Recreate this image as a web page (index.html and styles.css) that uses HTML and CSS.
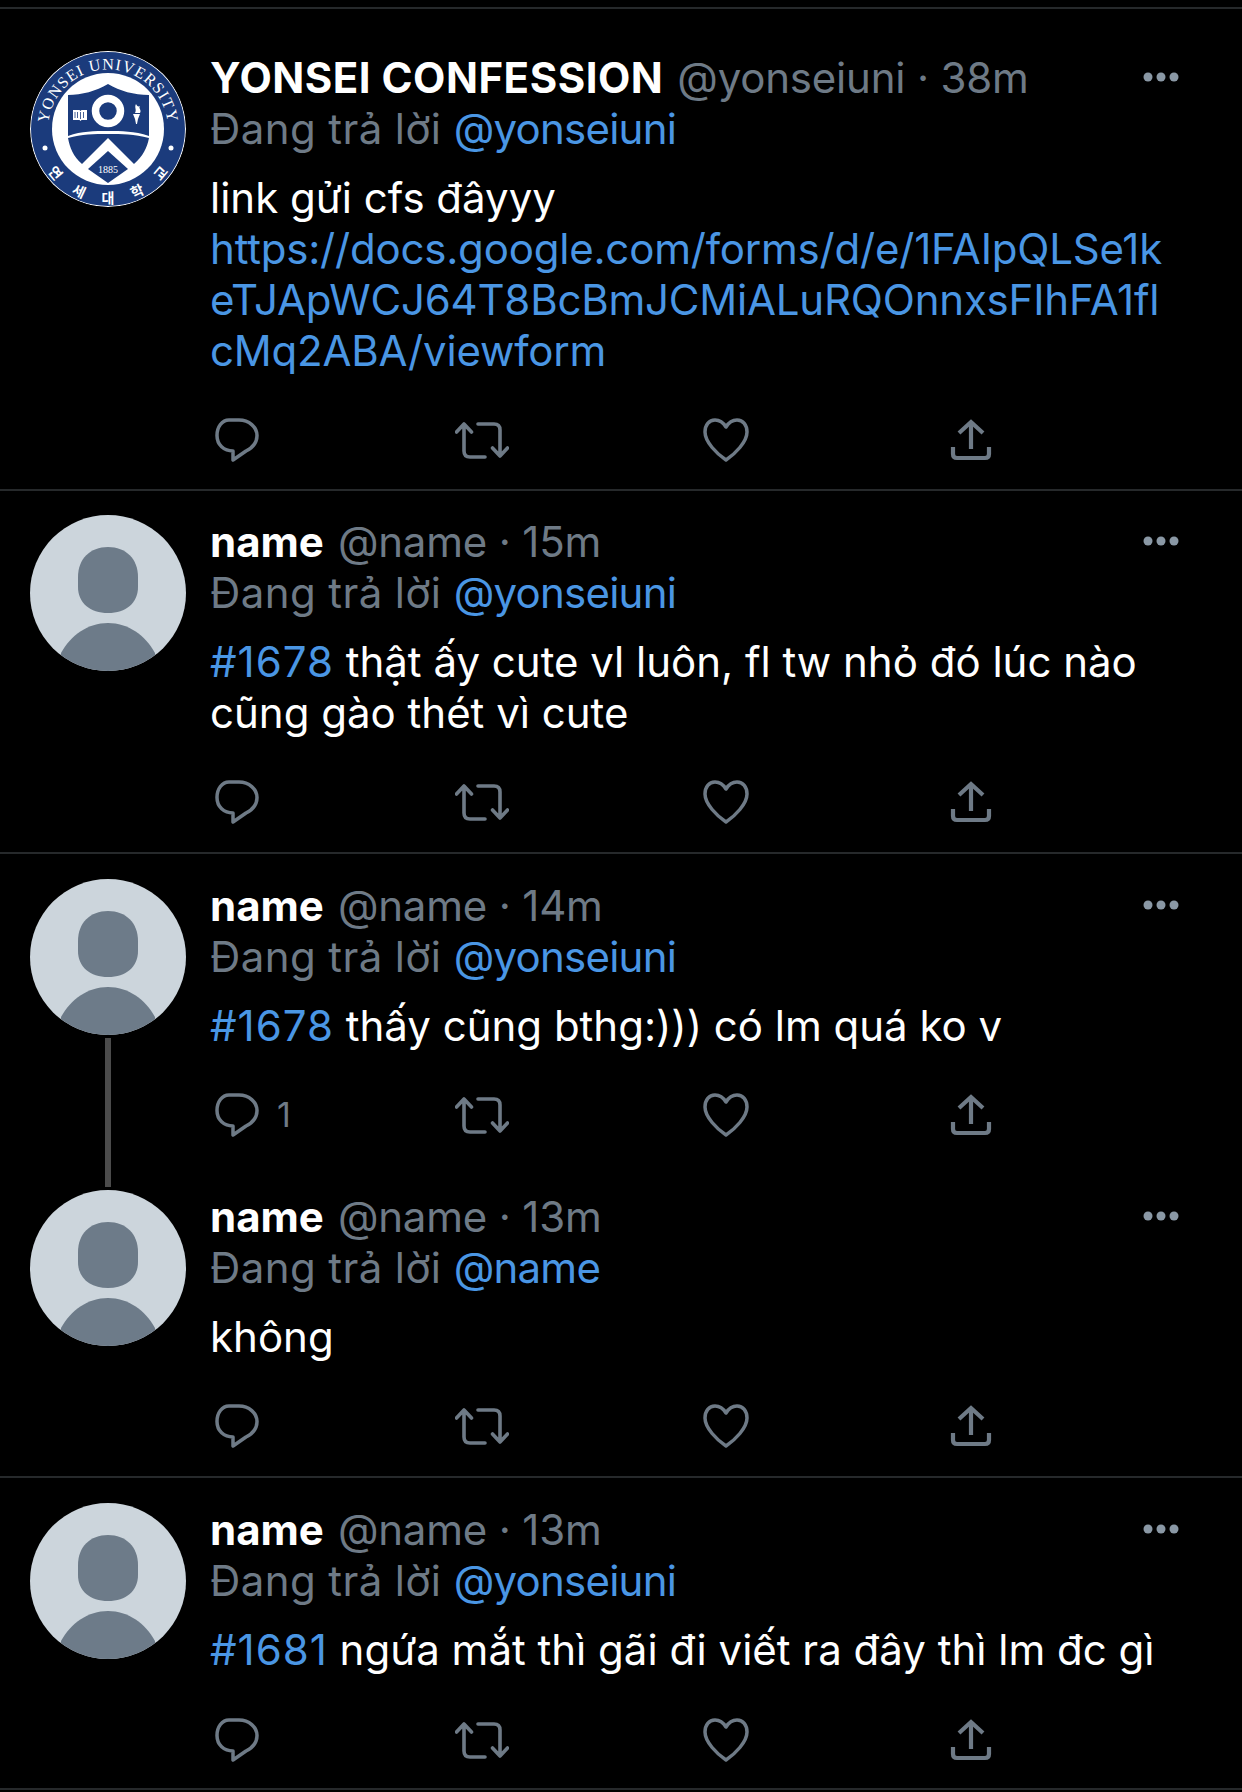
FILE: index.html
```html
<!DOCTYPE html>
<html lang="vi">
<head>
<meta charset="utf-8">
<title>Tweets</title>
<link rel="stylesheet" href="styles.css">
</head>
<body>
<svg class="defs" width="0" height="0" aria-hidden="true">
  <symbol id="i-avatar" viewBox="0 0 156 156">
    <rect width="156" height="156" fill="#ccd5dc"/>
    <path d="M78 32C96 32 108 44 108 62V72C108 88 96 98 78 98C60 98 48 88 48 72V62C48 44 60 32 78 32Z" fill="#6d7b89"/>
    <path d="M78 108C98 108 115 120 125 138V160H31V138C41 120 58 108 78 108Z" fill="#6d7b89"/>
  </symbol>
  <symbol id="i-reply" viewBox="0 0 44 44">
    <path d="M14 2H24C34 2 42 9 42 17.5C42 25 37 30 31 33L18 42V33C9 33 2 27 2 17.5C2 9 7 2 14 2Z" fill="none" stroke="currentColor" stroke-width="3.5" stroke-linejoin="round"/>
  </symbol>
  <symbol id="i-retweet" viewBox="0 0 54 38">
    <path d="M9 3V30Q9 36 15 36H30M1.500 11L9 3L16.500 11M23 3H39Q45 3 45 9V35M37.500 27L45 35L52.500 27" fill="none" stroke="currentColor" stroke-width="3.6" stroke-linecap="round" stroke-linejoin="round"/>
  </symbol>
  <symbol id="i-heart" viewBox="0 0 46 44">
    <path d="M23 9C20 4 16 2 12 2C6 2 2 7 2 14C2 24 14 36 23 42C32 36 44 24 44 14C44 7 40 2 34 2C30 2 26 4 23 9Z" fill="none" stroke="currentColor" stroke-width="3.5" stroke-linejoin="round"/>
  </symbol>
  <symbol id="i-share" viewBox="0 0 42 42">
    <path d="M21 3V30M9 14L21 3L33 14M3 28V35Q3 39 7 39H35Q39 39 39 35V28" fill="none" stroke="currentColor" stroke-width="4.2" stroke-linejoin="miter"/>
  </symbol>
  <symbol id="i-more" viewBox="0 0 36 10">
    <circle cx="5" cy="5" r="4.500" fill="currentColor"/>
    <circle cx="18" cy="5" r="4.500" fill="currentColor"/>
    <circle cx="31" cy="5" r="4.500" fill="currentColor"/>
  </symbol>
</svg>

<main class="timeline">

  <article class="tweet tweet-first">
    <div class="side">
      <svg class="avatar" viewBox="0 0 156 156" role="img" aria-label="Yonsei University">
        <defs>
          <path id="arc-top" d="M22 100A60 60 0 1 1 134 100"/>
        </defs>
        <circle cx="78" cy="78" r="78" fill="#fff"/>
        <circle cx="78" cy="78" r="77" fill="#1b3b7c"/>
        <circle cx="78" cy="78" r="56" fill="#fff"/>
        <path d="M78 33C90 40 104 44 119 44V70L119 85C104 80 92 80 78 80C64 80 52 80 38 85V44C52 44 66 40 78 33Z" fill="#1b3b7c"/>
        <path d="M38 87C52 83 64 83 78 83C92 83 104 83 119 87C117 97 113 105 104 113L78 87L52 113C43 105 40 97 38 87Z" fill="#1b3b7c"/>
        <path d="M78 100L98 118L78 132L58 118Z" fill="#1b3b7c"/>
        <circle cx="78" cy="60" r="12.500" fill="#1b3b7c" stroke="#fff" stroke-width="7.500"/>
        <path d="M43 59H49.500L50.500 60L51.500 59H57V69H51.500L50.500 70L49.500 69H43Z" fill="#fff"/>
        <path d="M50.500 61V68M45 61V67M47.500 61V67M53.500 61V67" stroke="#1b3b7c" stroke-width="0.800"/>
        <path d="M106 53C104 57 107 58 105 62H110C112 59 108 57 110 55C108 56 107 55 106 53ZM103 63H110L108 68L107 73H106L105 68Z" fill="#fff"/>
        <text class="seal-en"><textPath href="#arc-top" startOffset="50%" text-anchor="middle">YONSEI UNIVERSITY</textPath></text>
        <text class="seal-ko" x="78" y="152" text-anchor="middle" transform="rotate(50 78 78)">연</text>
        <text class="seal-ko" x="78" y="152" text-anchor="middle" transform="rotate(25 78 78)">세</text>
        <text class="seal-ko" x="78" y="152" text-anchor="middle">대</text>
        <text class="seal-ko" x="78" y="152" text-anchor="middle" transform="rotate(-25 78 78)">학</text>
        <text class="seal-ko" x="78" y="152" text-anchor="middle" transform="rotate(-50 78 78)">교</text>
        <text class="seal-year" x="78" y="122" text-anchor="middle">1885</text>
        <circle cx="15" cy="97" r="2.500" fill="#fff"/>
        <circle cx="141" cy="97" r="2.500" fill="#fff"/>
      </svg>
    </div>
    <div class="body">
      <header class="head">
        <span class="name name-caps">YONSEI CONFESSION</span>
        <span class="meta">@yonseiuni · 38m</span>
        <svg class="more"><use href="#i-more"/></svg>
      </header>
      <p class="replying">Đang trả lời <a class="link">@yonseiuni</a></p>
      <p class="text">link gửi cfs đâyyy<br><a class="link url">https://docs.google.com/forms/d/e/1FAIpQLSe1k<br>eTJApWCJ64T8BcBmJCMiALuRQOnnxsFIhFA1fl<br>cMq2ABA/viewform</a></p>
      <div class="actions">
        <span class="action"><svg class="ic-reply"><use href="#i-reply"/></svg></span>
        <span class="action"><svg class="ic-retweet"><use href="#i-retweet"/></svg></span>
        <span class="action"><svg class="ic-heart"><use href="#i-heart"/></svg></span>
        <span class="action"><svg class="ic-share"><use href="#i-share"/></svg></span>
      </div>
    </div>
  </article>

  <article class="tweet">
    <div class="side"><svg class="avatar"><use href="#i-avatar"/></svg></div>
    <div class="body">
      <header class="head">
        <span class="name">name</span>
        <span class="meta">@name · 15m</span>
        <svg class="more"><use href="#i-more"/></svg>
      </header>
      <p class="replying">Đang trả lời <a class="link">@yonseiuni</a></p>
      <p class="text"><a class="link tag">#1678</a> thật ấy cute vl luôn, fl tw nhỏ đó lúc nào<br>cũng gào thét vì cute</p>
      <div class="actions">
        <span class="action"><svg class="ic-reply"><use href="#i-reply"/></svg></span>
        <span class="action"><svg class="ic-retweet"><use href="#i-retweet"/></svg></span>
        <span class="action"><svg class="ic-heart"><use href="#i-heart"/></svg></span>
        <span class="action"><svg class="ic-share"><use href="#i-share"/></svg></span>
      </div>
    </div>
  </article>

  <article class="tweet tweet-thread-start">
    <div class="side">
      <svg class="avatar"><use href="#i-avatar"/></svg>
      <span class="thread-line"></span>
    </div>
    <div class="body">
      <header class="head">
        <span class="name">name</span>
        <span class="meta">@name · 14m</span>
        <svg class="more"><use href="#i-more"/></svg>
      </header>
      <p class="replying">Đang trả lời <a class="link">@yonseiuni</a></p>
      <p class="text"><a class="link tag">#1678</a> thấy cũng bthg:))) có lm quá ko v</p>
      <div class="actions">
        <span class="action"><svg class="ic-reply"><use href="#i-reply"/></svg><span class="count">1</span></span>
        <span class="action"><svg class="ic-retweet"><use href="#i-retweet"/></svg></span>
        <span class="action"><svg class="ic-heart"><use href="#i-heart"/></svg></span>
        <span class="action"><svg class="ic-share"><use href="#i-share"/></svg></span>
      </div>
    </div>
  </article>

  <article class="tweet tweet-thread-end">
    <div class="side"><svg class="avatar"><use href="#i-avatar"/></svg></div>
    <div class="body">
      <header class="head">
        <span class="name">name</span>
        <span class="meta">@name · 13m</span>
        <svg class="more"><use href="#i-more"/></svg>
      </header>
      <p class="replying">Đang trả lời <a class="link">@name</a></p>
      <p class="text">không</p>
      <div class="actions">
        <span class="action"><svg class="ic-reply"><use href="#i-reply"/></svg></span>
        <span class="action"><svg class="ic-retweet"><use href="#i-retweet"/></svg></span>
        <span class="action"><svg class="ic-heart"><use href="#i-heart"/></svg></span>
        <span class="action"><svg class="ic-share"><use href="#i-share"/></svg></span>
      </div>
    </div>
  </article>

  <article class="tweet tweet-last">
    <div class="side"><svg class="avatar"><use href="#i-avatar"/></svg></div>
    <div class="body">
      <header class="head">
        <span class="name">name</span>
        <span class="meta">@name · 13m</span>
        <svg class="more"><use href="#i-more"/></svg>
      </header>
      <p class="replying">Đang trả lời <a class="link">@yonseiuni</a></p>
      <p class="text"><a class="link tag">#1681</a> ngứa mắt thì gãi đi viết ra đây thì lm đc gì</p>
      <div class="actions">
        <span class="action"><svg class="ic-reply"><use href="#i-reply"/></svg></span>
        <span class="action"><svg class="ic-retweet"><use href="#i-retweet"/></svg></span>
        <span class="action"><svg class="ic-heart"><use href="#i-heart"/></svg></span>
        <span class="action"><svg class="ic-share"><use href="#i-share"/></svg></span>
      </div>
    </div>
  </article>

</main>
</body>
</html>
```
FILE: styles.css
```css
* { box-sizing: border-box; }

html, body {
  margin: 0;
  padding: 0;
  background: #000;
  height: 100%;
  overflow: hidden;
}

body {
  font-family: Inter, "Noto Sans", "Liberation Sans", sans-serif;
  color: #fff;
  font-size: 42px;
}

.defs { position: absolute; }

.timeline { padding-top: 7px; }

.tweet {
  display: flex;
  gap: 24px;
  padding: 24px 63px 28px 30px;
  border-top: 2px solid #26292b;
}

.tweet-first { padding-top: 42px; padding-bottom: 27px; }
.tweet-thread-start { padding-top: 25px; }
.tweet-thread-end { border-top: 0; padding-top: 25px; }
.tweet-last { border-bottom: 2px solid #26292b; padding-top: 25px; padding-bottom: 26px; }
.tweet-last .actions { margin-top: 43px; }

.side {
  display: flex;
  flex-direction: column;
  align-items: center;
  flex: 0 0 156px;
}

.avatar {
  display: block;
  width: 156px;
  height: 156px;
  border-radius: 50%;
  overflow: hidden;
}

.thread-line {
  flex: 1;
  width: 6px;
  margin-top: 3px;
  margin-bottom: -50px;
  background: #4b4b4b;
}

.seal-en {
  font-family: "Liberation Serif", serif;
  font-size: 16px;
  letter-spacing: 1px;
  fill: #fff;
}

.seal-ko {
  font-family: "Noto Sans CJK KR", sans-serif;
  font-size: 14px;
  font-weight: 700;
  fill: #fff;
}

.seal-year {
  font-family: "Liberation Serif", serif;
  font-size: 10px;
  fill: #fff;
}

.body {
  flex: 1;
  min-width: 0;
}

.head {
  display: flex;
  align-items: center;
  height: 52px;
  white-space: nowrap;
}

.name {
  font-weight: 700;
}

.name-caps {
  letter-spacing: 0.500px;
}

.meta {
  color: #6e7a86;
  margin-left: 14px;
  letter-spacing: -0.200px;
}

.more {
  width: 36px;
  height: 10px;
  margin-left: auto;
  color: #8a98a5;
}

.replying {
  margin: 0;
  height: 52px;
  line-height: 52px;
  color: #6e7a86;
  letter-spacing: 0.400px;
}

.replying .link {
  letter-spacing: -0.750px;
}

.link {
  color: #4a96e4;
}

.tag {
  letter-spacing: 1px;
}

.url {
  letter-spacing: -0.200px;
}

.text {
  margin: 17px 0 0;
  line-height: 51px;
  white-space: nowrap;
}

.actions {
  display: grid;
  grid-template-columns: 240px 248px 247px 1fr;
  align-items: center;
  height: 44px;
  margin-top: 42px;
  padding-left: 5px;
  color: #6e7a86;
}

.action {
  display: flex;
  align-items: center;
  gap: 18px;
}

.count {
  font-size: 34px;
  line-height: 44px;
}

.ic-reply { width: 44px; height: 44px; }
.ic-retweet { width: 54px; height: 38px; }
.ic-heart { width: 46px; height: 44px; }
.ic-share { width: 42px; height: 42px; }
```
